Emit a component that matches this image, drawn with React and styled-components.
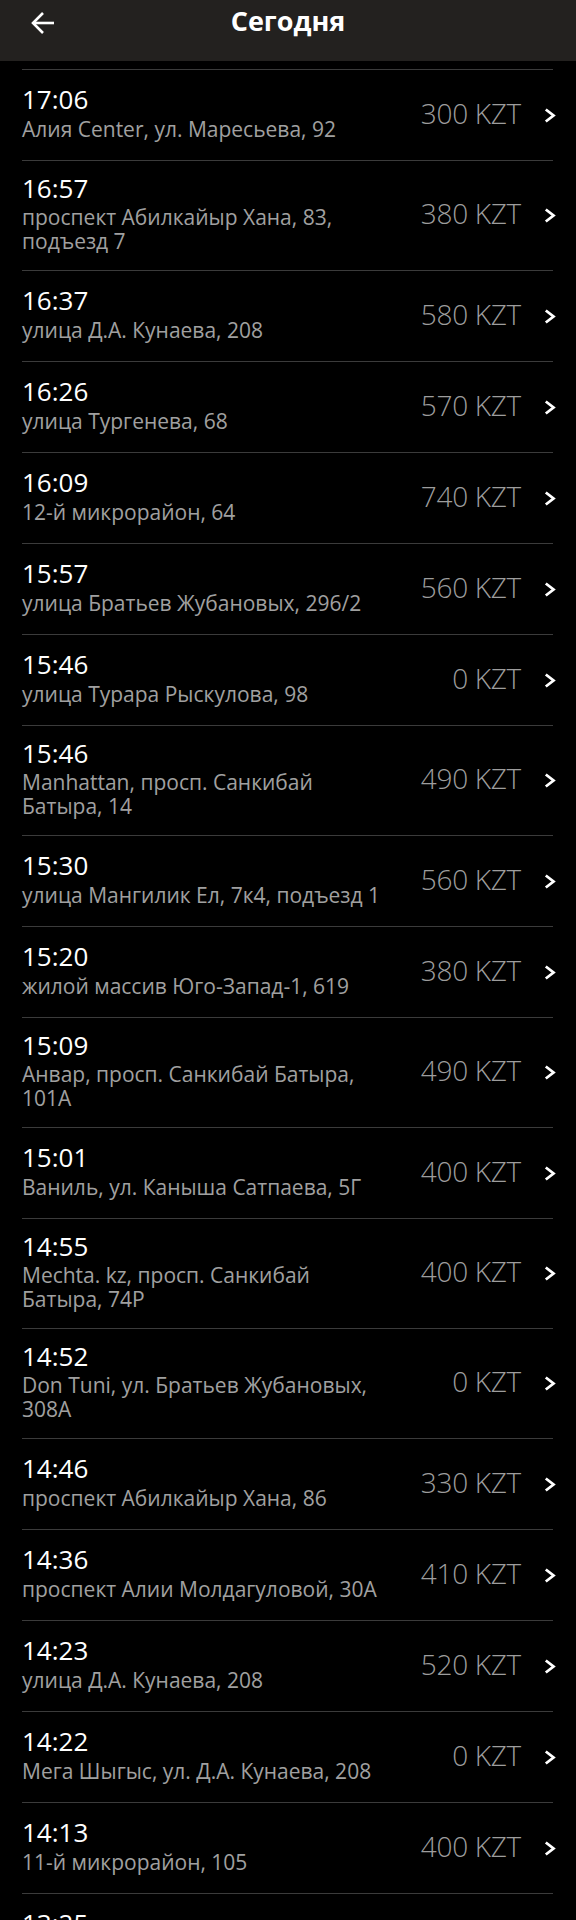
import React from "react";
import styled, { createGlobalStyle } from "styled-components";

const GlobalStyle = createGlobalStyle`
  body {
    margin: 0;
    background: #000000;
    font-family: "Open Sans", "Noto Sans", sans-serif;
  }
`;

const Page = styled.div`
  height: 1920px;
  overflow: hidden;
  background: #000000;
`;

const Header = styled.div`
  display: grid;
  grid-template-columns: 1fr auto 1fr;
  align-items: start;
  height: 61px;
  background: #23211f;
`;

const BackButton = styled.div`
  justify-self: start;
  padding: 11px 0 0 30px;
  line-height: 0;
`;

const Title = styled.h1`
  margin: 0;
  font-size: 27px;
  font-weight: 700;
  line-height: 41px;
  color: #ffffff;
`;

const List = styled.div`
  padding: 8px 23px 0 22px;
`;

const Row = styled.div`
  box-sizing: border-box;
  display: flex;
  align-items: center;
  min-height: 91px;
  border-top: 1px solid #3b3b3b;
  padding: 12.5px 0 17px;
`;

const Info = styled.div`
  flex: 1;
  min-width: 0;
`;

const Time = styled.div`
  font-size: 26px;
  line-height: 28px;
  color: #ffffff;
`;

const Address = styled.div`
  margin-top: 3.5px;
  font-size: 21px;
  line-height: 24px;
  color: #a0a0a0;

  span {
    display: block;
    white-space: nowrap;
  }
`;

const Price = styled.div`
  font-size: 28px;
  font-weight: 300;
  letter-spacing: -0.3px;
  line-height: 34px;
  color: #9d9d9d;
  white-space: nowrap;
`;

const Chevron = styled.svg`
  flex-shrink: 0;
  margin: 4.5px -3px 0 23px;
`;

const rides = [
  { time: "17:06", address: ["Алия Center, ул. Маресьева, 92"], price: 300 },
  { time: "16:57", address: ["проспект Абилкайыр Хана, 83,", "подъезд 7"], price: 380 },
  { time: "16:37", address: ["улица Д.А. Кунаева, 208"], price: 580 },
  { time: "16:26", address: ["улица Тургенева, 68"], price: 570 },
  { time: "16:09", address: ["12-й микрорайон, 64"], price: 740 },
  { time: "15:57", address: ["улица Братьев Жубановых, 296/2"], price: 560 },
  { time: "15:46", address: ["улица Турара Рыскулова, 98"], price: 0 },
  { time: "15:46", address: ["Manhattan, просп. Санкибай", "Батыра, 14"], price: 490 },
  { time: "15:30", address: ["улица Мангилик Ел, 7к4, подъезд 1"], price: 560 },
  { time: "15:20", address: ["жилой массив Юго-Запад-1, 619"], price: 380 },
  { time: "15:09", address: ["Анвар, просп. Санкибай Батыра,", "101А"], price: 490 },
  { time: "15:01", address: ["Ваниль, ул. Каныша Сатпаева, 5Г"], price: 400 },
  { time: "14:55", address: ["Mechta. kz, просп. Санкибай", "Батыра, 74Р"], price: 400 },
  { time: "14:52", address: ["Don Tuni, ул. Братьев Жубановых,", "308А"], price: 0 },
  { time: "14:46", address: ["проспект Абилкайыр Хана, 86"], price: 330 },
  { time: "14:36", address: ["проспект Алии Молдагуловой, 30А"], price: 410 },
  { time: "14:23", address: ["улица Д.А. Кунаева, 208"], price: 520 },
  { time: "14:22", address: ["Мега Шыгыс, ул. Д.А. Кунаева, 208"], price: 0 },
  { time: "14:13", address: ["11-й микрорайон, 105"], price: 400 },
  { time: "13:25", address: ["улица Д.А. Кунаева, 208"], price: 450 },
];

const BackArrow = () => (
  <svg width="26" height="24" viewBox="0 0 26 24" fill="none">
    <path d="M3 12H24" stroke="#ffffff" strokeWidth="2.6" />
    <path d="M13 2L3 12L13 22" stroke="#ffffff" strokeWidth="2.6" />
  </svg>
);

const App = () => {
  return (
    <Page>
      <GlobalStyle />
      <Header>
        <BackButton>
          <BackArrow />
        </BackButton>
        <Title>Сегодня</Title>
      </Header>

      <List>
        {rides.map((ride, i) => (
          <Row key={i}>
            <Info>
              <Time>{ride.time}</Time>
              <Address>
                {ride.address.map((line, j) => (
                  <span key={j}>{line}</span>
                ))}
              </Address>
            </Info>
            <Price>{ride.price} KZT</Price>
            <Chevron width="12" height="15" viewBox="0 0 12 15" fill="none">
              <polyline points="1.8,1.5 9.5,7.5 1.8,13.5" stroke="#ffffff" strokeWidth="2.8" />
            </Chevron>
          </Row>
        ))}
      </List>
    </Page>
  );
};

export default App;
